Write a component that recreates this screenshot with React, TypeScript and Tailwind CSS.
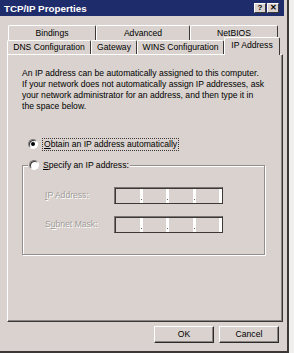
import React from 'react';

// --- small win98 bits ---
const Radio: React.FC<{ checked?: boolean }> = ({ checked }) => (
    <div className="w-[10px] h-[10px] shrink-0 rounded-full border border-t-[#7f7a78] border-l-[#7f7a78] border-b-white border-r-white bg-white flex items-center justify-center shadow-[inset_1px_1px_0_#3d3838]">
        {checked && <div className="w-[4px] h-[4px] rounded-full bg-black" />}
    </div>
);

const Tab: React.FC<{ label: string; w: string }> = ({ label, w }) => (
    <div className={`${w} h-full border-t border-l border-t-white border-l-white border-r border-r-[#3d3838] rounded-t-[2px] flex items-center justify-center`}>
        {label}
    </div>
);

const IpBox: React.FC = () => (
    <div className="w-[109px] h-[17px] border border-t-[#7a7472] border-l-[#7a7472] border-b-[#3d3838] border-r-[#3d3838] flex">
        <div className="flex-1 flex border-t border-l border-t-[#3d3838] border-l-[#3d3838]">
            {[0, 1, 2, 3].map(i => (
                <div key={i} className="flex-1 flex">
                    <div className="flex-1" />
                    <div className="w-[3px] bg-white flex flex-col justify-end items-center pb-[3px]">
                        {i < 3 && <div className="w-[1px] h-[1px] bg-[#6a6462]" />}
                    </div>
                </div>
            ))}
        </div>
    </div>
);

const Button: React.FC<{ label: string }> = ({ label }) => (
    <div className="w-[60px] h-[17px] border border-t-white border-l-white border-b-[#2d2a2a] border-r-[#2d2a2a] shadow-[inset_-1px_-1px_0_#8a8482] flex items-center justify-center">
        {label}
    </div>
);

const Disabled: React.FC<{ children: React.ReactNode }> = ({ children }) => (
    <span className="text-[#a29c9a] [text-shadow:1px_1px_0_#ffffff]">{children}</span>
);

export default function App() {
    return (
        <div className="w-[294px] h-[353px] bg-[#f1efed] font-['Liberation_Sans',Arial,sans-serif] text-[8.6px] leading-[11px] text-black">
            <div className="w-[289px] h-[353px] bg-[#d9d2ce] border-r-2 border-b-2 border-r-[#3d3838] border-b-[#3d3838] flex flex-col pr-[3px]">
                {/* title bar */}
                <div className="h-[16px] bg-[#1f2c6c] flex items-center justify-between pl-[4px] pr-[5px]">
                    <span className="text-white font-bold text-[9.8px]">TCP/IP Properties</span>
                    <div className="flex gap-[1px]">
                        <div className="w-[12px] h-[10px] bg-[#d9d2ce] border border-t-white border-l-white border-b-[#3d3838] border-r-[#3d3838] flex items-center justify-center font-bold text-[8px] leading-none">?</div>
                        <div className="w-[12px] h-[10px] bg-[#d9d2ce] border border-t-white border-l-white border-b-[#3d3838] border-r-[#3d3838] flex items-center justify-center font-bold text-[8px] leading-none">✕</div>
                    </div>
                </div>

                {/* tabs */}
                <div className="mt-[9px] pl-[7px] flex flex-col">
                    <div className="h-[15px] flex ml-[1px]">
                        <Tab label="Bindings" w="w-[88px]" />
                        <Tab label="Advanced" w="w-[94px]" />
                        <Tab label="NetBIOS" w="w-[88px]" />
                    </div>
                    <div className="h-[14px] flex">
                        <Tab label="DNS Configuration" w="w-[84px]" />
                        <Tab label="Gateway" w="w-[46px]" />
                        <Tab label="WINS Configuration" w="w-[87px]" />
                        <div className="relative z-10 w-[56px] h-[18px] -mt-[3px] bg-[#d9d2ce] border-t border-l border-t-white border-l-white border-r border-r-[#3d3838] rounded-t-[2px] flex items-start justify-center pt-[2px]">
                            IP Address
                        </div>
                    </div>
                </div>

                {/* panel */}
                <div className="ml-[7px] w-[276px] h-[268px] border border-t-white border-l-white border-b-[#3d3838] border-r-[#3d3838] shadow-[inset_-1px_-1px_0_#8a8482] flex flex-col">
                    <p className="pl-[14px] pt-[13px]">
                        An IP address can be automatically assigned to this computer.<br />
                        If your network does not automatically assign IP addresses, ask<br />
                        your network administrator for an address, and then type it in<br />
                        the space below.
                    </p>

                    <div className="mt-[26px] ml-[20px] h-[12px] flex items-center gap-[4px]">
                        <Radio checked />
                        <span className="border border-dotted border-[#3d3838] px-[1px]">
                            <u>O</u>btain an IP address automatically
                        </span>
                    </div>

                    <div className="mt-[15px] ml-[14px] w-[243px] h-[90px] border border-[#948e8c] shadow-[inset_1px_1px_0_#ffffff,1px_1px_0_#ffffff] flex flex-col">
                        <div className="-mt-[7px] ml-[5px] self-start h-[12px] bg-[#d9d2ce] px-[1px] flex items-center gap-[4px]">
                            <Radio />
                            <span><u>S</u>pecify an IP address:</span>
                        </div>
                        <div className="mt-[16px] ml-[22px] flex items-center">
                            <div className="w-[69px]"><Disabled><u>I</u>P Address:</Disabled></div>
                            <IpBox />
                        </div>
                        <div className="mt-[12px] ml-[22px] flex items-center">
                            <div className="w-[69px]"><Disabled>S<u>u</u>bnet Mask:</Disabled></div>
                            <IpBox />
                        </div>
                    </div>
                </div>

                {/* buttons */}
                <div className="mt-[4px] pr-[5px] flex justify-end gap-[5px]">
                    <Button label="OK" />
                    <Button label="Cancel" />
                </div>
            </div>
        </div>
    );
}
